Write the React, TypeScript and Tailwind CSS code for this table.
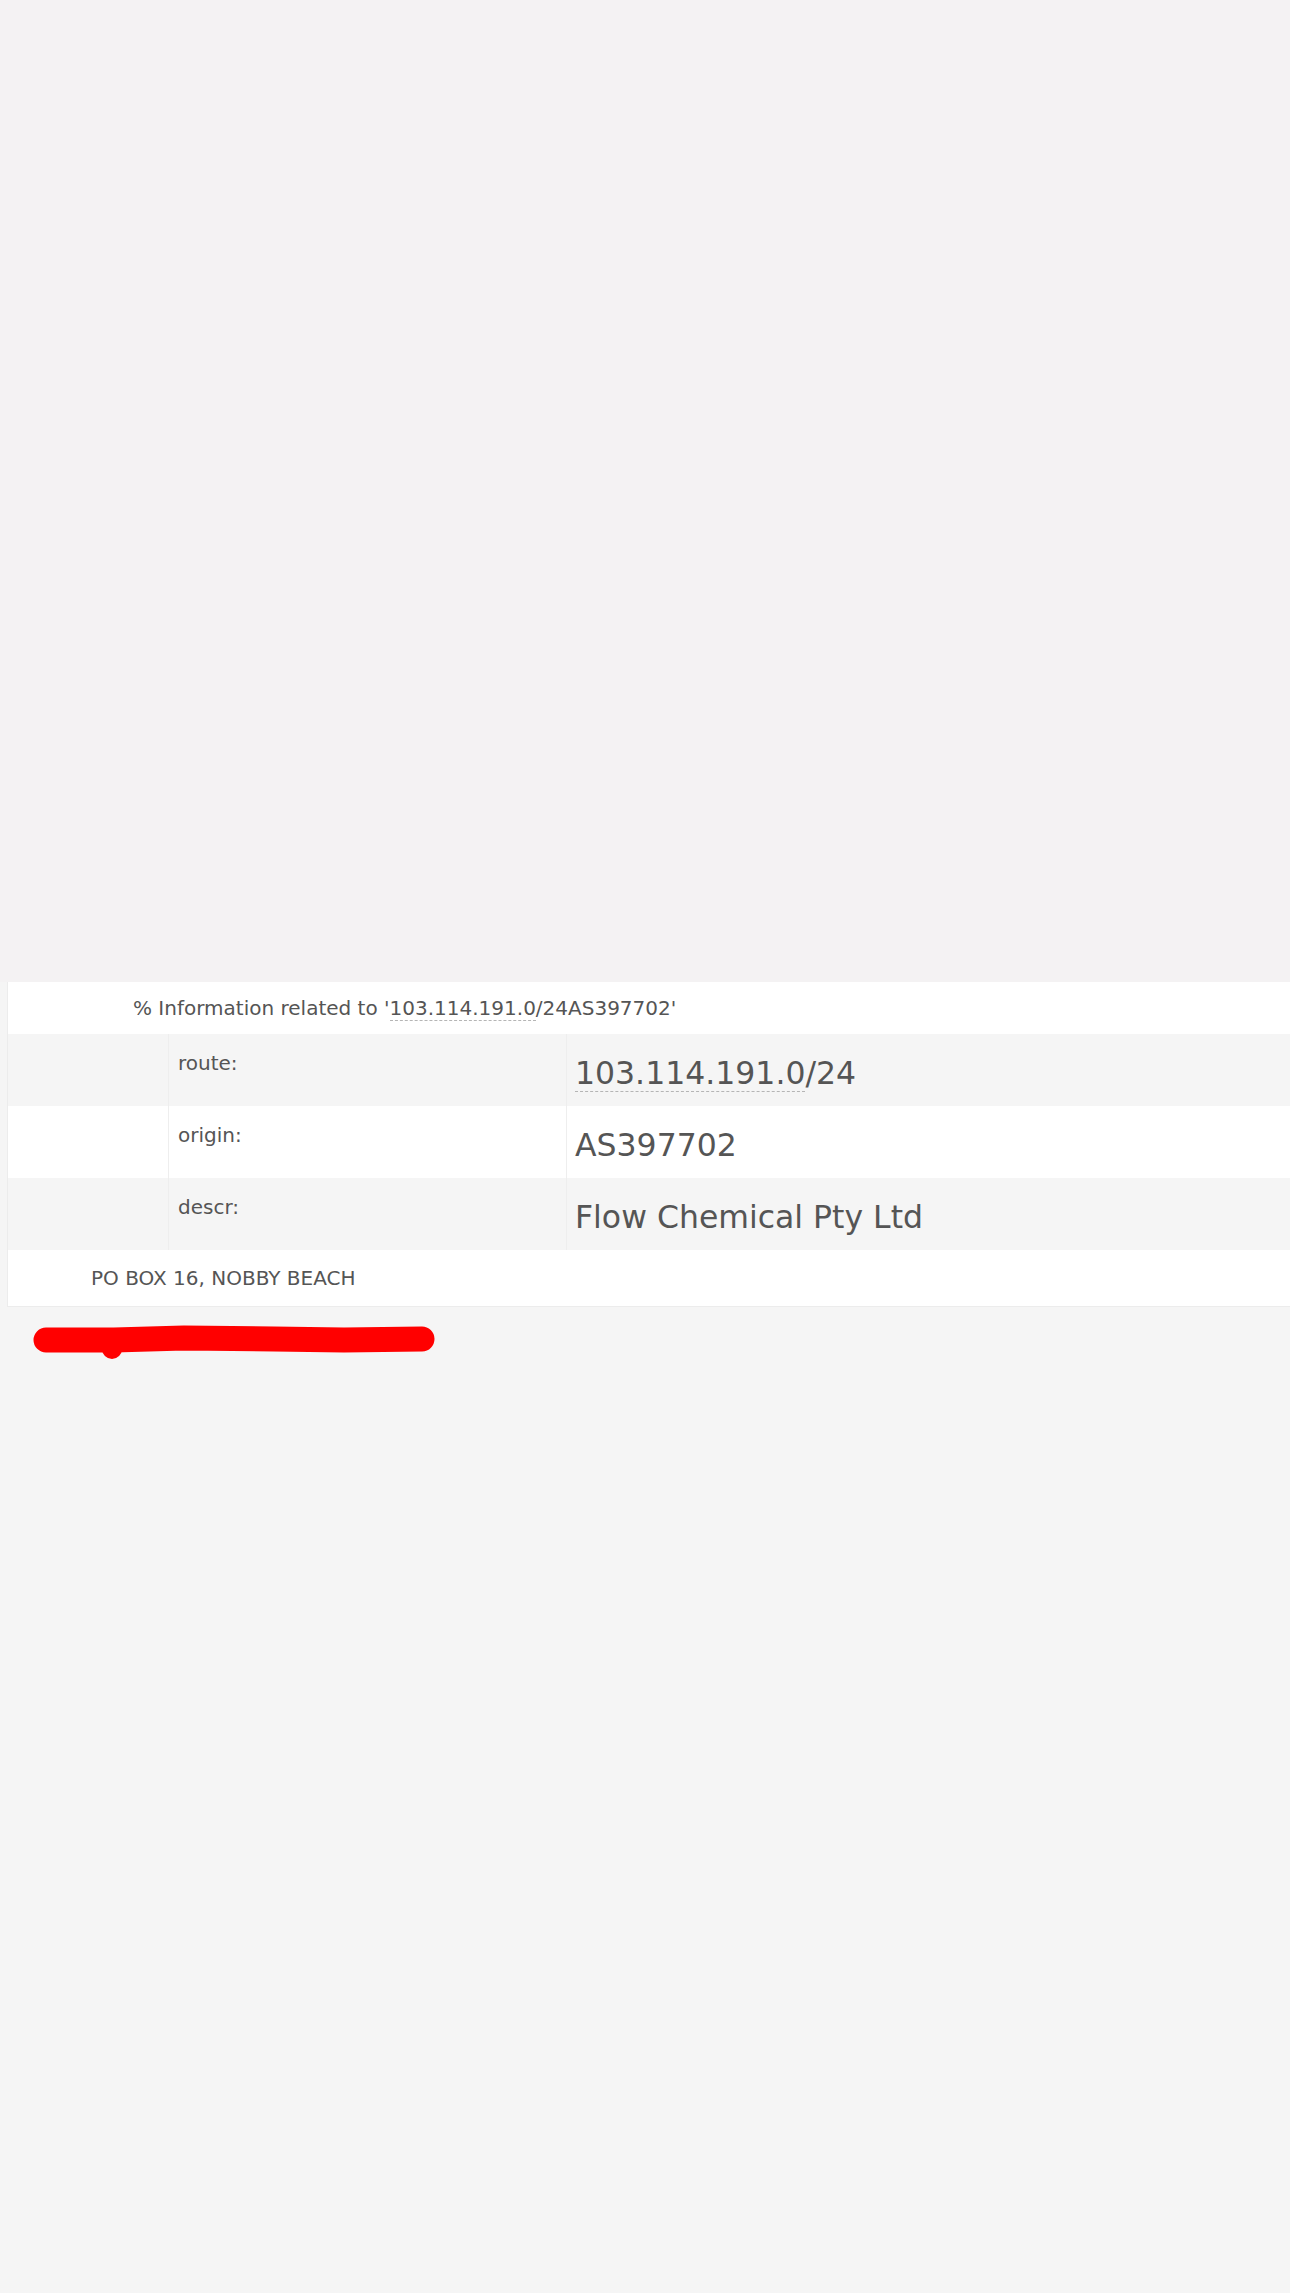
import React from 'react'

const rows = [
  { label: 'route:', value: 'route', bg: 'bg-[#f5f5f5]' },
  { label: 'origin:', value: 'AS397702', bg: 'bg-white' },
  { label: 'descr:', value: 'Flow Chemical Pty Ltd', bg: 'bg-[#f5f5f5]' },
]

function Dashed({ children }: { children: React.ReactNode }) {
  return <span className="border-b border-dashed border-[#b5b5b5]">{children}</span>
}

export default function App() {
  return (
    <div className="min-h-[2293px] bg-[#f5f5f5] font-['DejaVu_Sans',_'Liberation_Sans',_sans-serif] text-[#555]">
      <div className="h-[982px] bg-[#f4f2f3]" />

      <div className="ml-[7px] border-l border-b border-[#ececec] bg-white">
        <div className="flex h-[52px] items-center pl-[125px] text-[20px] leading-[24px]">
          <span>
            % Information related to '<Dashed>103.114.191.0</Dashed>/24AS397702'
          </span>
        </div>

        {rows.map(row => (
          <div key={row.label} className={`grid h-[72px] grid-cols-[160px_398px_1fr] ${row.bg}`}>
            <div />
            <div className="border-l border-[#eeeeee] pl-[9px] pt-[17px] text-[20px] leading-[24px]">{row.label}</div>
            <div className="border-l border-[#eeeeee] pl-[8px] pt-[21px] text-[31.5px] leading-[36px]">
              {row.value === 'route' ? (
                <span>
                  <Dashed>103.114.191.0</Dashed>/24
                </span>
              ) : (
                row.value
              )}
            </div>
          </div>
        ))}

        <div className="flex h-[56px] items-center pl-[83px] text-[20px] leading-[24px]">PO BOX 16, NOBBY BEACH</div>
      </div>

      <div className="pl-[24px] pt-[17px]">
        <svg width="420" height="48" viewBox="0 0 420 48">
          <path
            d="M22 16 L90 16 L160 14 L250 15 L320 16 L398 15"
            stroke="#ff0000"
            strokeWidth="25"
            strokeLinecap="round"
            strokeLinejoin="round"
            fill="none"
          />
          <circle cx="88" cy="25" r="10" fill="#ff0000" />
        </svg>
      </div>
    </div>
  )
}
